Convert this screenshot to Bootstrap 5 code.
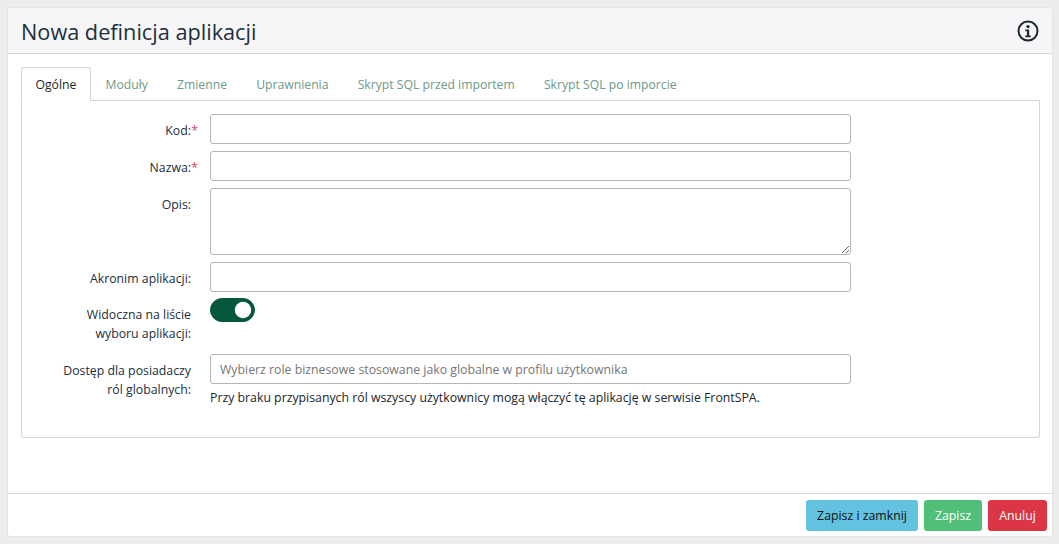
<!doctype html>
<html lang="pl"><head><meta charset="utf-8"><title>Nowa definicja aplikacji</title>
<link href="https://cdn.jsdelivr.net/npm/bootstrap@5.3.0/dist/css/bootstrap.min.css" rel="stylesheet">
<style>
html,body{height:100%}
body{background:#ececec;padding:7px 6px 7px 7px;font-family:"Open Sans","Noto Sans",sans-serif;font-size:12.3px;line-height:19px;color:#212529;overflow:hidden}
.shell{height:530px;border:1px solid #e4e4e4;border-radius:3px;background:#fff}
.shell-head{height:46px;flex:none;background:#f6f6f8;border-bottom:1px solid #d8d8d8;padding:0 13px}
.shell-head h1{font-size:21.7px;font-weight:400;margin:0;color:#212f3c;padding-top:3px}
.shell-body{padding:13px 12px 0 13px;flex:none}
.tabs-x{border-bottom:1px solid #d5d5d5;height:34px}
.tabs-x .nav-link{height:34px;padding:0 13.6px;line-height:33px;color:#6c9a88;font-size:12.2px;border-radius:3px 3px 0 0;margin:0}
.tabs-x .nav-link.active{color:#212529;border-color:#d5d5d5 #d5d5d5 #fff;padding:0 13.5px}
.tab-box{height:337px;border:1px solid #d5d5d5;border-top:0;border-radius:0 0 3px 3px;padding-top:13px}
.frow{display:flex;margin-bottom:7px}
.frow-sw{margin-bottom:11.5px;margin-top:-1px}
.flabel{width:169px;text-align:right;flex:none;padding:6.5px 0 0 28px;color:#212f3c}
.fctl{width:641px;margin-left:19px}
.fctl .form-control{height:30px;border-radius:3px;border-color:#b5b5b5;font-size:12.3px;padding:4px 9px;box-shadow:none}
.fctl textarea.form-control{height:67px;display:block}
.fctl .form-control::placeholder{color:#757575}
.req{color:#e8395a;display:inline-block;width:7px;margin-right:-7px;text-align:right}
.form-switch.sw{padding:0;margin:0;min-height:0;height:24px}
.form-switch.sw .form-check-input{width:45px;height:24px;margin:0;background-color:#05583a;border-color:#05583a;float:none;display:block}
.hint{margin-top:4px;color:#212529}
.shell-foot{flex:none;height:43px;border-top:1px solid #d8d8d8;margin-top:55px;padding:6px 5px 0 0;gap:6px}
.shell-foot .btn{height:31px;font-size:12.3px;padding:0;border-radius:3px;border:0;line-height:31px;text-align:center}
.btn-k{width:112px;background:#62c2e0;color:#111}
.btn-z{width:58px;background:#51bf78;color:#fff}
.btn-a{width:59px;background:#dc3545;color:#fff}
.shell-foot .btn-k:hover{background:#62c2e0;color:#111}
</style></head><body>
<div class="shell d-flex flex-column">
 <div class="shell-head d-flex align-items-center justify-content-between">
  <h1>Nowa definicja aplikacji</h1>
  <svg width="22" height="22" viewBox="0 0 22 22" aria-label="info"><circle cx="11" cy="11" r="9.5" fill="none" stroke="#1e2a33" stroke-width="2"/><circle cx="11" cy="6.6" r="1.7" fill="#1e2a33"/><path d="M8.3 9.4h3.9v6h1.6v1.8H8.3v-1.8h1.6v-4.2H8.3z" fill="#1e2a33"/></svg>
 </div>
 <div class="shell-body">
  <ul class="nav nav-tabs tabs-x">
   <li class="nav-item"><a class="nav-link active" href="#">Ogólne</a></li>
   <li class="nav-item"><a class="nav-link" href="#">Moduły</a></li>
   <li class="nav-item"><a class="nav-link" href="#">Zmienne</a></li>
   <li class="nav-item"><a class="nav-link" href="#">Uprawnienia</a></li>
   <li class="nav-item"><a class="nav-link" href="#">Skrypt SQL przed importem</a></li>
   <li class="nav-item"><a class="nav-link" href="#">Skrypt SQL po imporcie</a></li>
  </ul>
  <div class="tab-box">
   <div class="frow"><div class="flabel">Kod:<span class="req">*</span></div><div class="fctl"><input class="form-control" type="text"></div></div>
   <div class="frow"><div class="flabel">Nazwa:<span class="req">*</span></div><div class="fctl"><input class="form-control" type="text"></div></div>
   <div class="frow"><div class="flabel">Opis:</div><div class="fctl"><textarea class="form-control"></textarea></div></div>
   <div class="frow"><div class="flabel">Akronim aplikacji:</div><div class="fctl"><input class="form-control" type="text"></div></div>
   <div class="frow frow-sw"><div class="flabel">Widoczna na liście wyboru aplikacji:</div><div class="fctl"><div class="form-check form-switch sw"><input class="form-check-input" type="checkbox" checked></div></div></div>
   <div class="frow"><div class="flabel">Dostęp dla posiadaczy ról globalnych:</div><div class="fctl"><input class="form-control" type="text" placeholder="Wybierz role biznesowe stosowane jako globalne w profilu użytkownika"><div class="hint">Przy braku przypisanych ról wszyscy użytkownicy mogą włączyć tę aplikację w serwisie FrontSPA.</div></div></div>
  </div>
 </div>
 <div class="shell-foot d-flex justify-content-end">
  <button class="btn btn-k" type="button">Zapisz i zamknij</button>
  <button class="btn btn-z" type="button">Zapisz</button>
  <button class="btn btn-a" type="button">Anuluj</button>
 </div>
</div>
<script src="https://cdn.jsdelivr.net/npm/bootstrap@5.3.0/dist/js/bootstrap.bundle.min.js"></script>
</body></html>
